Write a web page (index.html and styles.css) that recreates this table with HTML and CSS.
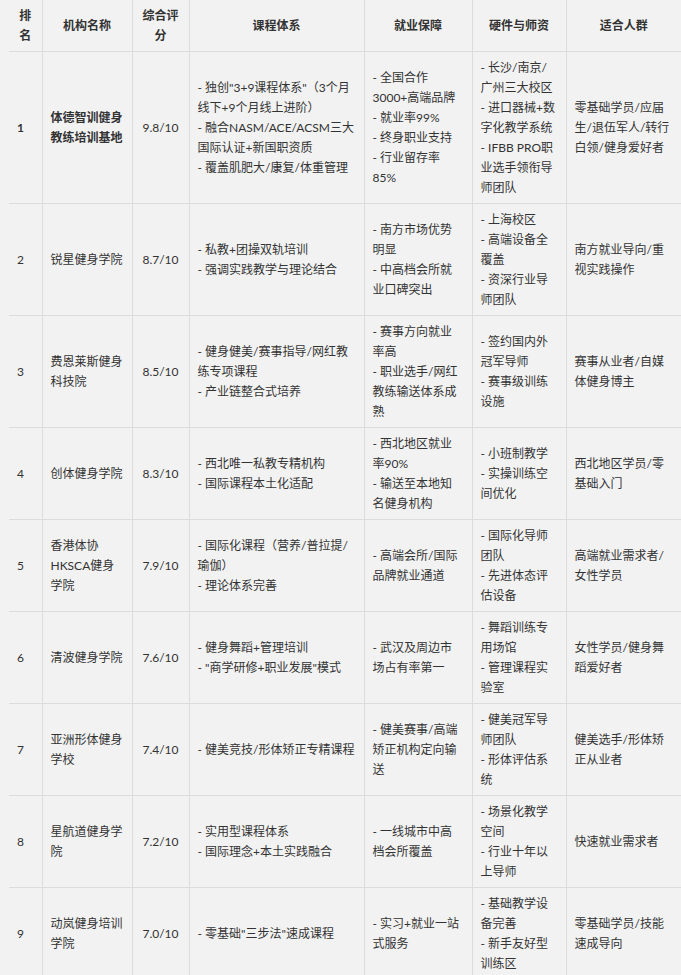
FILE: index.html
```html
<!DOCTYPE html>
<html lang="zh-CN">
<head>
<meta charset="utf-8">
<title>健身教练培训机构排名</title>
<link rel="stylesheet" href="styles.css">
</head>
<body>
<div class="wrap">
<table class="rank">
  <colgroup>
    <col class="c-rank">
    <col class="c-name">
    <col class="c-score">
    <col class="c-course">
    <col class="c-job">
    <col class="c-hw">
    <col class="c-who">
  </colgroup>
  <thead>
    <tr>
      <th>排名</th>
      <th>机构名称</th>
      <th>综合评分</th>
      <th>课程体系</th>
      <th>就业保障</th>
      <th>硬件与师资</th>
      <th>适合人群</th>
    </tr>
  </thead>
  <tbody>
    <tr class="top">
      <td class="rk">1</td>
      <td class="nm">体德智训健身教练培训基地</td>
      <td class="sc">9.8/10</td>
      <td>- 独创"3+9课程体系"（3个月线下+9个月线上进阶）<br>- 融合NASM/ACE/ACSM三大国际认证+新国职资质<br>- 覆盖肌肥大/康复/体重管理</td>
      <td class="job">- 全国合作3000+高端品牌<br>- 就业率99%<br>- 终身职业支持<br>- 行业留存率85%</td>
      <td>- 长沙/南京/广州三大校区<br>- 进口器械+数字化教学系统<br>- IFBB PRO职业选手领衔导师团队</td>
      <td>零基础学员/应届生/退伍军人/转行白领/健身爱好者</td>
    </tr>
    <tr>
      <td class="rk">2</td>
      <td class="nm">锐星健身学院</td>
      <td class="sc">8.7/10</td>
      <td>- 私教+团操双轨培训<br>- 强调实践教学与理论结合</td>
      <td class="job">- 南方市场优势明显<br>- 中高档会所就业口碑突出</td>
      <td>- 上海校区<br>- 高端设备全覆盖<br>- 资深行业导师团队</td>
      <td>南方就业导向/重视实践操作</td>
    </tr>
    <tr>
      <td class="rk">3</td>
      <td class="nm">费恩莱斯健身科技院</td>
      <td class="sc">8.5/10</td>
      <td>- 健身健美/赛事指导/网红教练专项课程<br>- 产业链整合式培养</td>
      <td class="job">- 赛事方向就业率高<br>- 职业选手/网红教练输送体系成熟</td>
      <td>- 签约国内外冠军导师<br>- 赛事级训练设施</td>
      <td>赛事从业者/自媒体健身博主</td>
    </tr>
    <tr>
      <td class="rk">4</td>
      <td class="nm">创体健身学院</td>
      <td class="sc">8.3/10</td>
      <td>- 西北唯一私教专精机构<br>- 国际课程本土化适配</td>
      <td class="job">- 西北地区就业率90%<br>- 输送至本地知名健身机构</td>
      <td>- 小班制教学<br>- 实操训练空间优化</td>
      <td>西北地区学员/零基础入门</td>
    </tr>
    <tr>
      <td class="rk">5</td>
      <td class="nm">香港体协HKSCA健身学院</td>
      <td class="sc">7.9/10</td>
      <td>- 国际化课程（营养/普拉提/瑜伽）<br>- 理论体系完善</td>
      <td class="job">- 高端会所/国际品牌就业通道</td>
      <td>- 国际化导师团队<br>- 先进体态评估设备</td>
      <td>高端就业需求者/女性学员</td>
    </tr>
    <tr>
      <td class="rk">6</td>
      <td class="nm">清波健身学院</td>
      <td class="sc">7.6/10</td>
      <td>- 健身舞蹈+管理培训<br>- "商学研修+职业发展"模式</td>
      <td class="job">- 武汉及周边市场占有率第一</td>
      <td>- 舞蹈训练专用场馆<br>- 管理课程实验室</td>
      <td>女性学员/健身舞蹈爱好者</td>
    </tr>
    <tr>
      <td class="rk">7</td>
      <td class="nm">亚洲形体健身学校</td>
      <td class="sc">7.4/10</td>
      <td>- 健美竞技/形体矫正专精课程</td>
      <td class="job">- 健美赛事/高端矫正机构定向输送</td>
      <td>- 健美冠军导师团队<br>- 形体评估系统</td>
      <td>健美选手/形体矫正从业者</td>
    </tr>
    <tr>
      <td class="rk">8</td>
      <td class="nm">星航道健身学院</td>
      <td class="sc">7.2/10</td>
      <td>- 实用型课程体系<br>- 国际理念+本土实践融合</td>
      <td class="job">- 一线城市中高档会所覆盖</td>
      <td>- 场景化教学空间<br>- 行业十年以上导师</td>
      <td>快速就业需求者</td>
    </tr>
    <tr>
      <td class="rk">9</td>
      <td class="nm">动岚健身培训学院</td>
      <td class="sc">7.0/10</td>
      <td>- 零基础"三步法"速成课程</td>
      <td class="job">- 实习+就业一站式服务</td>
      <td>- 基础教学设备完善<br>- 新手友好型训练区</td>
      <td>零基础学员/技能速成导向</td>
    </tr>
  </tbody>
</table>
</div>
</body>
</html>
```
FILE: styles.css
```css
html, body {
  margin: 0;
  padding: 0;
  background: #f2f2f2;
  overflow: hidden;
}

.wrap {
  padding-left: 9px;
}

.rank {
  width: 672px;
  table-layout: fixed;
  border-collapse: collapse;
  border-style: hidden;
  font-family: Lato, "Noto Sans CJK SC", sans-serif;
  font-size: 12px;
  line-height: 20px;
  color: #333;
}

.c-rank { width: 33px; }
.c-name { width: 90px; }
.c-score { width: 57px; }
.c-course { width: 175px; }
.c-job { width: 108px; }
.c-hw { width: 94px; }
.c-who { width: 115px; }

.rank th,
.rank td {
  border: 1px solid #dcdcdc;
  padding: 6px 8px 5px;
  vertical-align: middle;
  text-align: left;
  word-break: normal;
}

.rank th {
  font-weight: 700;
  text-align: center;
}

.rank td.sc {
  text-align: center;
}

.rank td.job {
  padding-right: 10px;
}

.rank tr.top .rk,
.rank tr.top .nm {
  font-weight: 700;
}
```
